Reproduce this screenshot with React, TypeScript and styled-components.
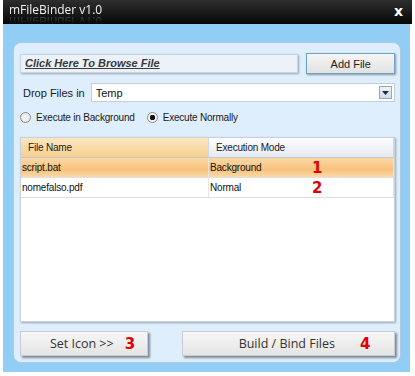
import React from "react";
import styled, { createGlobalStyle } from "styled-components";

const Global = createGlobalStyle`
  html, body { margin: 0; padding: 0; background: #fff; }
  body { font-family: "Liberation Sans", Arial, sans-serif; }
`;

const files = [
  { name: "script.bat", mode: "Background", mark: "1", selected: true },
  { name: "nomefalso.pdf", mode: "Normal", mark: "2", selected: false },
];

export default function App() {
  return (
    <>
      <Global />
      <Window>
        <TitleBar>
          <Title>mFileBinder v1.0</Title>
          <Close>x</Close>
        </TitleBar>
        <Body>
          <Panel>
            <BrowseRow>
              <BrowseField>Click Here To Browse File</BrowseField>
              <AddButton>Add File</AddButton>
            </BrowseRow>
            <DropRow>
              <Label>Drop Files in</Label>
              <Combo>
                <span>Temp</span>
                <ComboArrow>
                  <svg width="7" height="4" viewBox="0 0 7 4">
                    <path d="M0 0h7L3.5 4z" fill="#1c2f4a" />
                  </svg>
                </ComboArrow>
              </Combo>
            </DropRow>
            <RadioRow>
              <Radio>
                <RadioDot />
                Execute in Background
              </Radio>
              <Radio>
                <RadioDot checked />
                Execute Normally
              </Radio>
            </RadioRow>
            <Table>
              <HeaderRow>
                <HeadCell sorted>File Name</HeadCell>
                <HeadCell>Execution Mode</HeadCell>
              </HeaderRow>
              {files.map((f) => (
                <Row key={f.name} selected={f.selected}>
                  <Cell>{f.name}</Cell>
                  <ModeCell>
                    <span>{f.mode}</span>
                    <Mark>{f.mark}</Mark>
                  </ModeCell>
                </Row>
              ))}
            </Table>
            <ButtonRow>
              <BigButton width={128} shift={17}>
                Set Icon &gt;&gt;<ButtonMark gap={11}>3</ButtonMark>
              </BigButton>
              <BigButton width={213} shift={32}>
                Build / Bind Files<ButtonMark gap={25}>4</ButtonMark>
              </BigButton>
            </ButtonRow>
          </Panel>
        </Body>
      </Window>
    </>
  );
}

const Window = styled.div`
  width: 415px;
  height: 376px;
  background: #fff;
  overflow: hidden;
`;

const TitleBar = styled.div`
  height: 24px;
  margin: 0 3px;
  background: linear-gradient(#2e2e2e, #070707);
  display: flex;
  align-items: center;
  justify-content: space-between;
  padding: 0 9px 0 6px;
`;

const Title = styled.div`
  color: #f2f2f2;
  font-family: "Open Sans", sans-serif;
  font-size: 12px;
  margin-top: -6px;
  -webkit-box-reflect: below -5px
    linear-gradient(transparent 35%, rgba(255, 255, 255, 0.35));
`;

const Close = styled.div`
  color: #fff;
  font-family: "DejaVu Sans", sans-serif;
  font-weight: bold;
  font-size: 14px;
  margin-top: -2px;
`;

const Body = styled.div`
  margin: 0 5px 0 3px;
  height: 348px;
  background: #92cdf6;
  padding: 18px 9px 0 10px;
  box-sizing: border-box;
`;

const Panel = styled.div`
  height: 321px;
  box-sizing: border-box;
  background: #dfeefc;
  border: 1px solid #a9cbe8;
  border-radius: 8px;
  padding: 10px 5px 0 6px;
  display: flex;
  flex-direction: column;
`;

const BrowseRow = styled.div`
  display: flex;
  align-items: center;
  gap: 8px;
`;

const BrowseField = styled.div`
  width: 280px;
  height: 19px;
  box-sizing: border-box;
  background: #eaf1f8;
  border: 1px solid #c9d4df;
  box-shadow: 1px 1px 2px #9aa5b0;
  font-size: 11px;
  font-style: italic;
  font-weight: bold;
  text-decoration: underline;
  color: #3a3a3a;
  padding: 2px 0 0 4px;
`;

const AddButton = styled.div`
  width: 89px;
  height: 21px;
  box-sizing: border-box;
  border: 1px solid #6fa2c8;
  background: linear-gradient(#f6f6f6, #e2e2e2);
  box-shadow: 1px 1px 2px #8a96a0;
  font-size: 11px;
  color: #222;
  display: flex;
  align-items: center;
  justify-content: center;
`;

const DropRow = styled.div`
  display: flex;
  align-items: center;
  margin-top: 9px;
  gap: 6px;
  padding-left: 3px;
`;

const Label = styled.div`
  font-size: 11px;
  color: #1a1a1a;
  white-space: nowrap;
`;

const Combo = styled.div`
  width: 310px;
  height: 19px;
  box-sizing: border-box;
  background: #fff;
  border: 1px solid #c4cfd9;
  display: flex;
  align-items: center;
  justify-content: space-between;
  padding: 0 2px 0 4px;
  font-size: 11px;
  color: #111;
`;

const ComboArrow = styled.div`
  width: 13px;
  height: 13px;
  box-sizing: border-box;
  border: 1px solid #94a8bf;
  background: linear-gradient(#eef4fa, #cfdcea);
  display: flex;
  align-items: center;
  justify-content: center;
`;

const RadioRow = styled.div`
  display: flex;
  gap: 12px;
  margin-top: 10px;
`;

const Radio = styled.label`
  display: flex;
  align-items: center;
  gap: 5px;
  font-size: 10px;
  color: #1a1a1a;
  letter-spacing: -0.2px;
`;

const RadioDot = styled.span<{ checked?: boolean }>`
  width: 11px;
  height: 11px;
  box-sizing: border-box;
  border-radius: 50%;
  border: 1px solid #8a8a8a;
  background: radial-gradient(
    circle,
    ${(p) => (p.checked ? "#111 0 2.5px, #f4f4f4 3px" : "#f4f4f4 0, #e6e6e6 100%")}
  );
`;

const Table = styled.div`
  margin-top: 14px;
  height: 185px;
  flex-shrink: 0;
  box-sizing: border-box;
  background: #fff;
  border: 1px solid #c9d2dc;
  box-shadow: 1px 1px 2px #9aa8b4;
`;

const HeaderRow = styled.div`
  display: grid;
  grid-template-columns: 188px 1fr;
  height: 20px;
`;

const HeadCell = styled.div<{ sorted?: boolean }>`
  display: flex;
  align-items: center;
  padding-left: 7px;
  font-size: 10px;
  color: #222;
  letter-spacing: -0.2px;
  border-right: 1px solid #d2d8de;
  border-bottom: 1px solid #c0c8d0;
  background: ${(p) =>
    p.sorted
      ? "linear-gradient(#fbe6c2, #f7cf8e)"
      : "linear-gradient(#fbfcfd, #e6ebf0)"};
`;

const Row = styled.div<{ selected?: boolean }>`
  display: grid;
  grid-template-columns: 188px 1fr;
  height: 19px;
  border-bottom: 1px solid #e0e0e0;
  background: ${(p) =>
    p.selected ? "linear-gradient(#fbd9a6, #f7c27b 60%, #fbd9a8)" : "#fff"};
`;

const Cell = styled.div`
  display: flex;
  align-items: center;
  padding-left: 1px;
  font-size: 10px;
  color: #111;
  letter-spacing: -0.2px;
  border-right: 1px solid #e4e4e4;
`;

const ModeCell = styled(Cell)`
  display: grid;
  grid-template-columns: 102px auto;
  align-items: center;
`;

const Mark = styled.span`
  color: #e00000;
  font-family: "DejaVu Sans", sans-serif;
  font-weight: bold;
  font-size: 15px;
`;

const ButtonRow = styled.div`
  display: flex;
  justify-content: space-between;
  margin-top: 9px;
`;

const BigButton = styled.div<{ width: number; shift: number }>`
  width: ${(p) => p.width}px;
  height: 25px;
  flex-shrink: 0;
  box-sizing: border-box;
  border: 1px solid #c9cdd2;
  background: linear-gradient(#f7f7f7, #e4e4e4);
  box-shadow: 2px 2px 2px #7d8c99;
  display: flex;
  align-items: center;
  justify-content: center;
  font-family: "Open Sans", sans-serif;
  font-size: 12.5px;
  color: #333;
  padding-left: ${(p) => p.shift}px;
`;

const ButtonMark = styled.span<{ gap: number }>`
  margin-left: ${(p) => p.gap}px;
  color: #e00000;
  font-family: "DejaVu Sans", sans-serif;
  font-weight: bold;
  font-size: 15px;
`;
